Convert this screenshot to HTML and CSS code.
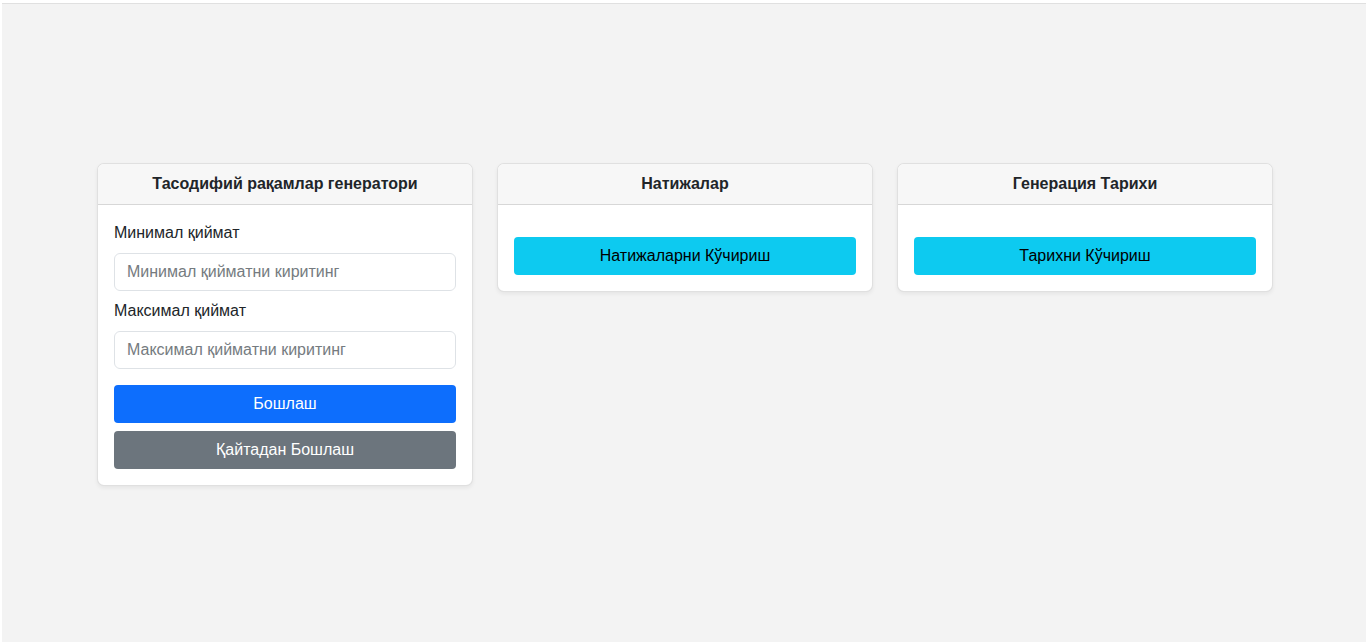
FILE: index.html
```html
<!DOCTYPE html>
<html lang="uz">
<head>
    <meta charset="UTF-8">
    <meta name="viewport" content="width=device-width, initial-scale=1.0">
    <title>Тасодифий рақамлар генератори</title>
    <link rel="stylesheet" href="styles.css">
</head>
<body>
    <div class="page">
        <div class="row">
            <div class="card">
                <div class="card-header">Тасодифий рақамлар генератори</div>
                <div class="card-body">
                    <label class="form-label" for="min">Минимал қиймат</label>
                    <input type="number" id="min" class="form-control" placeholder="Минимал қийматни киритинг">
                    <label class="form-label" for="max">Максимал қиймат</label>
                    <input type="number" id="max" class="form-control" placeholder="Максимал қийматни киритинг">
                    <button class="btn btn-primary first">Бошлаш</button>
                    <button class="btn btn-secondary">Қайтадан Бошлаш</button>
                </div>
            </div>

            <div class="card">
                <div class="card-header">Натижалар</div>
                <div class="card-body">
                    <div class="results"></div>
                    <button class="btn btn-info">Натижаларни Кўчириш</button>
                </div>
            </div>

            <div class="card">
                <div class="card-header">Генерация Тарихи</div>
                <div class="card-body">
                    <div class="results"></div>
                    <button class="btn btn-info">Тарихни Кўчириш</button>
                </div>
            </div>
        </div>
    </div>
</body>
</html>
```

FILE: styles.css
```css
html {
    background: #fff;
}
body {
    font-family: "Liberation Sans", Arial, sans-serif;
    font-size: 16px;
    line-height: 1.5;
    color: #212529;
    margin: 0;
    padding: 3px 0 0 2px;
}
.page {
    height: 639px;
    box-sizing: border-box;
    background-color: #f3f3f3;
    border-top: 1px solid #e0e0e0;
    display: flex;
    align-items: center;
    justify-content: center;
}
.row {
    display: flex;
    align-items: flex-start;
    gap: 24px;
    margin-left: 2px;
    margin-top: 2px;
}
.card {
    width: 376px;
    box-sizing: border-box;
    background: #fff;
    border: 1px solid rgba(0,0,0,0.12);
    border-radius: 7px;
    box-shadow: 0 2px 4px rgba(0,0,0,0.06);
    overflow: hidden;
}
.card-header {
    background: #f7f7f7;
    border-bottom: 1px solid rgba(0,0,0,0.13);
    padding: 8px 16px;
    text-align: center;
    font-weight: bold;
    color: #212529;
}
.card-body {
    padding: 16px;
    display: flex;
    flex-direction: column;
}
.form-label {
    margin-bottom: 8px;
}
.form-control {
    font-family: inherit;
    font-size: 16px;
    line-height: 1.5;
    height: 38px;
    box-sizing: border-box;
    padding: 6px 12px;
    border: 1px solid #dee2e6;
    border-radius: 6px;
    margin-bottom: 8px;
    outline: none;
    color: #212529;
}
.form-control::placeholder {
    color: #757b80;
}
.btn {
    font-family: inherit;
    font-size: 16px;
    line-height: 1.5;
    height: 38px;
    padding: 6px 12px;
    border: none;
    border-radius: 4px;
    cursor: pointer;
}
.btn.first {
    margin-top: 8px;
    margin-bottom: 8px;
}
.btn-primary {
    background: #0d6efd;
    color: #fff;
}
.btn-secondary {
    background: #6c757d;
    color: #fff;
}
.btn-info {
    background: #0dcaf0;
    color: #000;
}
.results {
    margin-bottom: 16px;
}
```
